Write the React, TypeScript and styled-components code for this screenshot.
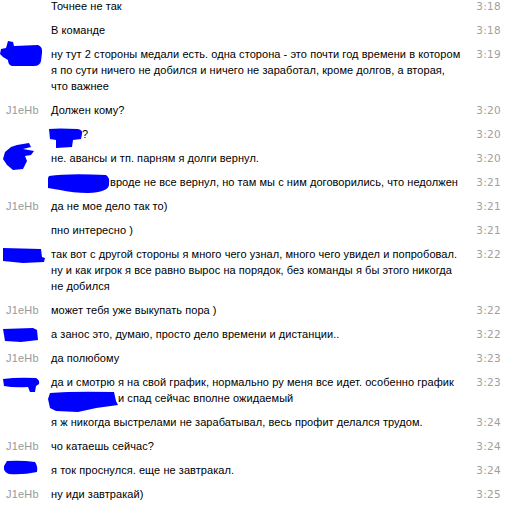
import styled, { createGlobalStyle } from "styled-components";

const GlobalStyle = createGlobalStyle`
    body {
        margin: 0;
        background: #fff;
        font-family: "Liberation Sans", Arial, sans-serif;
        font-size: 11px;
        color: #000;
    }
`;

const Log = styled.div`
    margin-top: -6px;
    width: 526px;
`;

const Row = styled.div`
    position: relative;
    display: grid;
    grid-template-columns: 51px 1fr 40px;
    padding: 4px 25px 4px 0;
    line-height: 16px;
`;

const Name = styled.div`
    padding-left: 6px;
    color: #999;
    letter-spacing: 0.2px;
`;

const Text = styled.div`
    white-space: nowrap;
    letter-spacing: 0.06px;
`;

const Time = styled.div`
    text-align: right;
    color: #a0a0a0;
    font-family: "DejaVu Sans", Verdana, sans-serif;
    font-size: 10.5px;
    letter-spacing: 0.3px;
`;

const Scribble = styled.svg<{ $x: number; $y: number }>`
    position: absolute;
    left: ${(p) => p.$x}px;
    top: ${(p) => p.$y}px;
    fill: #0000ff;
`;

const Hidden = styled.span<{ $w: number }>`
    display: inline-block;
    width: ${(p) => p.$w}px;
`;

type Mark = { x: number; y: number; w: number; h: number; d: string };

type Msg = {
    name?: string;
    lines: React.ReactNode[];
    time: string;
    marks?: Mark[];
};

// синие каракули поверх имён
const hand = "M8 0 L13 1 L14 5 L38 4 Q43 6 42 12 L41 20 Q40 25 34 25 L12 25 Q8 24 8 19 L3 16 L0 13 L1 8 L6 7 Z";

const msgs: Msg[] = [
    { lines: ["Точнее не так"], time: "3:18" },
    { lines: ["В команде"], time: "3:18" },
    {
        lines: [
            "ну тут 2 стороны медали есть. одна сторона - это почти год времени в котором",
            "я по сути ничего не добился и ничего не заработал, кроме долгов, а вторая,",
            "что важнее",
        ],
        time: "3:19",
        marks: [{ x: 0, y: -1, w: 43, h: 26, d: hand }],
    },
    { name: "J1eHb", lines: ["Должен кому?"], time: "3:20" },
    {
        lines: [
            <>
                <Hidden $w={31} />?
            </>,
        ],
        time: "3:20",
        marks: [
            {
                x: 48,
                y: 6,
                w: 35,
                h: 20,
                d: "M1 1 Q10 0 30 1 Q35 2 34 6 L33 11 L25 12 L24 19 L8 20 L8 12 L2 11 Z",
            },
        ],
    },
    {
        lines: ["не. авансы и тп. парням я долги вернул."],
        time: "3:20",
        marks: [
            {
                x: 3,
                y: -3,
                w: 32,
                h: 27,
                d: "M14 2 L26 0 L28 4 L20 6 L31 8 L28 12 L22 13 L24 18 L20 26 L10 27 L4 22 L0 16 L2 9 L8 4 Z",
            },
        ],
    },
    {
        lines: [
            <>
                <Hidden $w={59} />
                вроде не все вернул, но там мы с ним договорились, что недолжен
            </>,
        ],
        time: "3:21",
        marks: [
            {
                x: 48,
                y: 3,
                w: 62,
                h: 20,
                d: "M1 3 Q20 0 58 2 Q62 4 61 12 Q60 19 40 20 Q25 20 12 17 L0 15 L0 5 Z",
            },
        ],
    },
    { name: "J1eHb", lines: ["да не мое дело так то)"], time: "3:21" },
    { lines: ["пно интересно )"], time: "3:21" },
    {
        lines: [
            "так вот с другой стороны я много чего узнал, много чего увидел и попробовал.",
            "ну и как игрок я все равно вырос на порядок, без команды я бы этого никогда",
            "не добился",
        ],
        time: "3:22",
        marks: [{ x: 3, y: 6, w: 42, h: 15, d: "M0 0 L38 1 L39 9 L42 10 L41 14 L20 15 L0 13 Z" }],
    },
    { name: "J1eHb", lines: ["может тебя уже выкупать пора )"], time: "3:22" },
    {
        lines: ["а занос это, думаю, просто дело времени и дистанции.."],
        time: "3:22",
        marks: [{ x: 3, y: 6, w: 35, h: 14, d: "M0 1 L30 0 L34 2 L35 12 L18 14 L2 13 Z" }],
    },
    { name: "J1eHb", lines: ["да полюбому"], time: "3:23" },
    {
        lines: [
            "да и смотрю я на свой график, нормально ру меня все идет. особенно график",
            <>
                <Hidden $w={67} />и спад сейчас вполне ожидаемый
            </>,
        ],
        time: "3:23",
        marks: [
            {
                x: 2,
                y: 7,
                w: 38,
                h: 15,
                d: "M1 2 Q15 0 34 1 Q38 3 37 7 L34 9 L33 15 L28 15 L26 10 Q12 11 2 9 Z",
            },
            {
                x: 48,
                y: 21,
                w: 70,
                h: 21,
                d: "M2 2 Q25 0 66 1 L68 10 L70 14 Q50 16 30 21 L8 20 L2 17 L0 8 Z",
            },
        ],
    },
    { lines: ["я ж никогда выстрелами не зарабатывал, весь профит делался трудом."], time: "3:24" },
    { name: "J1eHb", lines: ["чо катаешь сейчас?"], time: "3:24" },
    {
        lines: ["я ток проснулся. еще не завтракал."],
        time: "3:24",
        marks: [{ x: 3, y: 2, w: 35, h: 15, d: "M4 1 Q18 0 32 2 Q35 6 34 12 Q20 15 6 14 Q0 12 1 6 Z" }],
    },
    { name: "J1eHb", lines: ["ну иди завтракай)"], time: "3:25" },
];

export default function App() {
    return (
        <>
            <GlobalStyle />
            <Log>
                {msgs.map((m, i) => (
                    <Row key={i}>
                        <Name>{m.name}</Name>
                        <Text>
                            {m.lines.map((l, j) => (
                                <div key={j}>{l}</div>
                            ))}
                        </Text>
                        <Time>{m.time}</Time>
                        {m.marks?.map((s, k) => (
                            <Scribble
                                key={k}
                                $x={s.x}
                                $y={s.y}
                                width={s.w}
                                height={s.h}
                                viewBox={`0 0 ${s.w} ${s.h}`}
                            >
                                <path d={s.d} />
                            </Scribble>
                        ))}
                    </Row>
                ))}
            </Log>
        </>
    );
}
